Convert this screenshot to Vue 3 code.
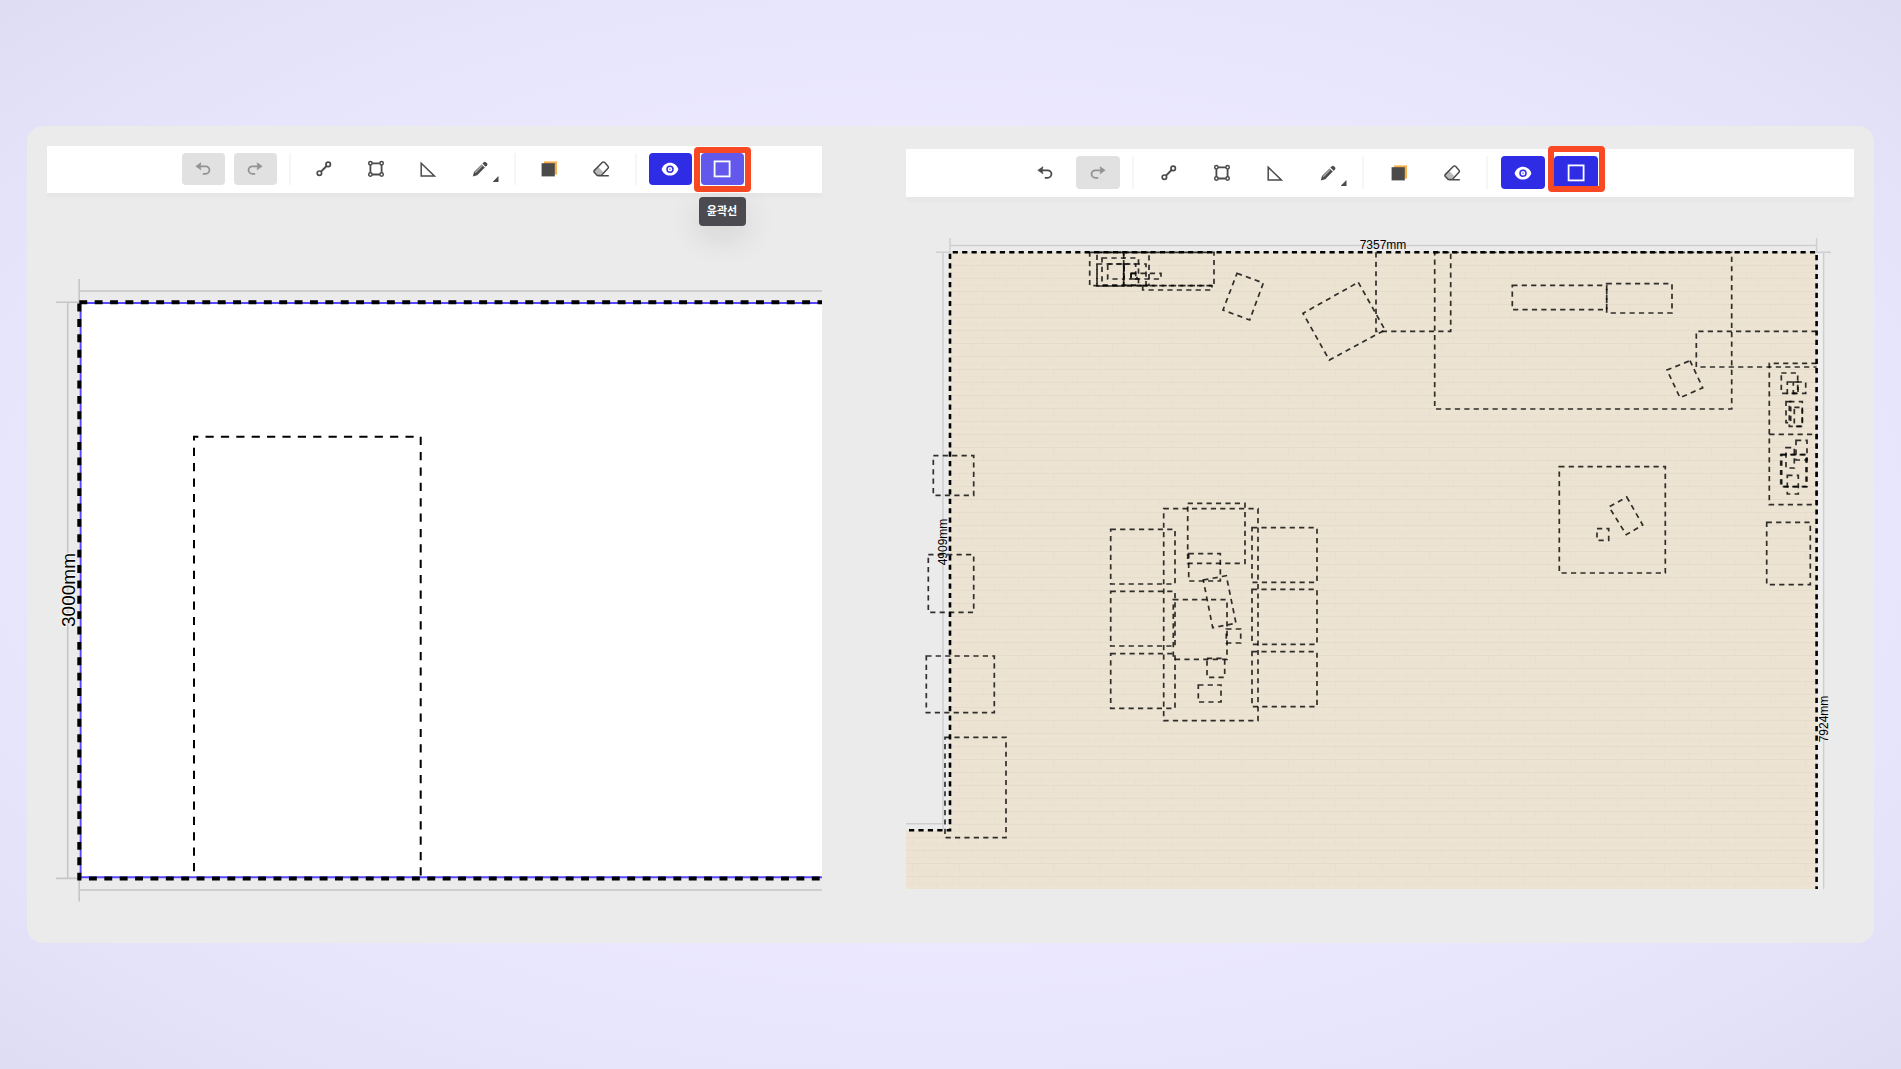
<script setup>
const toolbars = {
  basic: [
    { icon: 'undo', label: '실행 취소', disabled: true },
    { icon: 'redo', label: '다시 실행', disabled: true },
    { divider: true },
    { icon: 'line', label: '선' },
    { icon: 'polygon', label: '다각형' },
    { icon: 'triangle', label: '삼각자' },
    { icon: 'pencil', label: '연필', menu: true },
    { divider: true },
    { icon: 'fill', label: '채우기' },
    { icon: 'eraser', label: '지우개' },
    { divider: true },
    { icon: 'eye', label: '보기', active: true },
    { icon: 'outline', label: '윤곽선', active: true, hover: true, marked: true, tooltip: '윤곽선' },
  ],
  room: [
    { icon: 'undo', label: '실행 취소' },
    { icon: 'redo', label: '다시 실행', disabled: true },
    { divider: true },
    { icon: 'line', label: '선' },
    { icon: 'polygon', label: '다각형' },
    { icon: 'triangle', label: '삼각자' },
    { icon: 'pencil', label: '연필', menu: true },
    { divider: true },
    { icon: 'fill', label: '채우기' },
    { icon: 'eraser', label: '지우개' },
    { divider: true },
    { icon: 'eye', label: '보기', active: true },
    { icon: 'outline', label: '윤곽선', active: true, marked: true },
  ],
}

// Furniture footprints as [left, top, right, bottom]
const boxes = [
  [1089.7, 252.3, 1214, 285.7],
  [1097, 252.3, 1123.7, 286],
  [1123.7, 252.3, 1149, 285.3],
  [1102, 258, 1138.5, 285],
  [1097, 264, 1146, 286],
  [1107.7, 264, 1124, 279],
  [1124, 264, 1135.7, 279],
  [1142.7, 285.7, 1212, 290],
  [1131, 273.3, 1161, 279],
  [1131, 273.3, 1137, 279],
  [1434.7, 252.3, 1731.7, 409],
  [1512.3, 285.3, 1606.7, 309.7],
  [1606.7, 283.7, 1672, 313],
  [1769.3, 434.3, 1816.6, 504.7],
  [1781.3, 373, 1797.7, 393.3],
  [1787.3, 382, 1805.7, 393.3],
  [1793.3, 382, 1798, 393.3],
  [1786, 401.7, 1790.7, 422.7],
  [1789.3, 401.7, 1802.3, 426.3],
  [1794.3, 407.3, 1802.3, 426.3],
  [1796, 440.3, 1807, 460],
  [1786, 447.7, 1794.3, 468],
  [1780.7, 454.7, 1806, 486.7],
  [1781.7, 454.7, 1807, 486.7],
  [1787.3, 475.3, 1798.3, 494],
  [1766.7, 522.3, 1810.3, 584.7],
  [1559.3, 466.7, 1665.3, 573],
  [1597, 528.7, 1608.7, 540.3],
  [1110.7, 529.3, 1175, 584],
  [1110.7, 591.3, 1175, 646],
  [1110.7, 653.7, 1175, 708.3],
  [1252, 527.7, 1317, 582.3],
  [1252, 589.3, 1317, 644.3],
  [1252, 651.7, 1317, 706.7],
  [1163.7, 508.7, 1258, 720.7],
  [1187.7, 503.3, 1245, 563.3],
  [1188.7, 553.7, 1220.3, 581],
  [1173.3, 599.7, 1227, 659.3],
  [1226.3, 629, 1240.7, 643],
  [1207, 658.3, 1224.7, 677.3],
  [1198.3, 685, 1221, 702],
  [933.3, 455.7, 973.7, 495.3],
  [928.3, 554.7, 973.7, 612.3],
  [926.3, 656, 994.3, 712.7],
  [945, 737.3, 1006, 837.7],
]

// Footprints that share one side with a wall
const wallBoxes = [
  'M1376 252.3V331.3H1450.7V252.3',
  'M1816.6 331.3H1696.3V367H1816.6',
  'M1816.6 363.3H1769.3V434.3',
]

const turned = [
  '1237,273.3 1263.3,283 1249.7,320 1223,310',
  '1358.3,282.3 1385,330 1329.3,360 1303,313.3',
  '1690,360.7 1702.7,387.7 1680,397.7 1667,370',
  '1626.7,497 1642.7,525 1626.3,534.7 1609,507',
  '1203.3,580 1226.3,575.7 1236,623.3 1212.7,627.7',
]

const boxPath = ([l, t, r, b]) => `M${l} ${t}H${r}V${b}H${l}Z`
</script>

<template>
  <svg class="sprite" aria-hidden="true">
    <symbol id="undo" viewBox="0 0 20 20">
      <path d="M7 7.3H12.6a3.8 3.7 0 0 1 0 7.5H9.8" fill="none" stroke="currentColor" stroke-width="1.8" />
      <path d="M2.7 7.3 8 3.6 7.4 7.3 8 11Z" fill="currentColor" stroke="currentColor" stroke-width=".4" />
    </symbol>
    <symbol id="redo" viewBox="0 0 20 20">
      <path d="M13 7.3H7.4a3.8 3.7 0 0 0 0 7.5H10.2" fill="none" stroke="currentColor" stroke-width="1.8" />
      <path d="M17.3 7.3 12 3.6 12.6 7.3 12 11Z" fill="currentColor" stroke="currentColor" stroke-width=".4" />
    </symbol>
    <symbol id="line" viewBox="0 0 20 20">
      <g fill="none" stroke="currentColor" stroke-width="1.7">
        <circle cx="14.2" cy="5.4" r="2.2" />
        <circle cx="5.4" cy="14.2" r="2.2" />
        <path d="M7 12.6 12.6 7" stroke-width="2" />
      </g>
    </symbol>
    <symbol id="polygon" viewBox="0 0 20 20">
      <g fill="none" stroke="currentColor" stroke-width="1.5">
        <circle cx="4.4" cy="4.3" r="1.7" />
        <circle cx="15.6" cy="4.3" r="1.7" />
        <circle cx="4.4" cy="15.5" r="1.7" />
        <circle cx="15.6" cy="15.5" r="1.7" />
        <path d="M6.1 4.3H13.9M6.1 15.5H13.9M4.4 6V13.8M15.6 6V13.8" stroke-width="1.8" />
      </g>
    </symbol>
    <symbol id="triangle" viewBox="0 0 20 20">
      <path d="M3.2 4.2V17H16.4Z" fill="none" stroke="currentColor" stroke-width="1.5" />
    </symbol>
    <symbol id="pencil" viewBox="0 0 20 20">
      <path d="M2.8 17.4 4 13 11.6 5.4 14.8 8.6 7.2 16.2Z" fill="currentColor" />
      <path d="M4.6 13.2 12 5.8 13 6.8 5.6 14.2Z" fill="#a9a9a9" />
      <path d="M12.4 4.6 13.8 3.2a1.5 1.5 0 0 1 2.1 0l1.1 1.1a1.5 1.5 0 0 1 0 2.1L15.6 7.8Z" fill="currentColor" />
    </symbol>
    <symbol id="fill" viewBox="0 0 20 20">
      <path d="M5 2.4H18V15.6H5Z" fill="#f8ae4c" />
      <path d="M2.6 17.2H16V18H2.6Z" fill="#c9c9c9" />
      <path d="M2.6 4.2H15.8V17.2H2.6Z" fill="currentColor" />
    </symbol>
    <symbol id="eraser" viewBox="0 0 20 20">
      <path d="M7.1 7.8 12.2 12.9 8.8 16.6H6.2L3.1 12.6Z" fill="#b9b9b9" />
      <path d="M11.5 3.3a1.4 1.4 0 0 1 2 0L17 7.2a1.4 1.4 0 0 1 0 2L10.2 16.6H6.2L3.2 13.3a1.2 1.2 0 0 1 0-1.7ZM7 16.8H17.8" fill="none" stroke="currentColor" stroke-width="1.5" />
    </symbol>
    <symbol id="eye" viewBox="0 0 20 20">
      <path d="M1.6 10.2C3 6.2 6.2 3.8 10 3.8s7 2.4 8.4 6.4c-1.4 4-4.6 6.4-8.4 6.4s-7-2.4-8.4-6.4Z" fill="currentColor" />
      <circle cx="10" cy="10.2" r="3" fill="none" stroke="#2f2ce6" stroke-width="1.5" />
      <circle cx="10" cy="10.2" r=".9" fill="#8583ef" />
    </symbol>
    <symbol id="outline" viewBox="0 0 20 20">
      <rect x="2.6" y="2.4" width="15" height="15" fill="none" stroke="currentColor" stroke-width="1.8" />
    </symbol>
  </svg>

  <main class="page">
    <div class="card">
      <section v-for="(tools, name) in toolbars" :key="name" class="editor" :class="name">
        <div class="toolbar" role="toolbar">
          <template v-for="(tool, i) in tools" :key="i">
            <span v-if="tool.divider" class="divider"></span>
            <div v-else class="slot">
              <button
                type="button"
                class="tool"
                :class="{ active: tool.active, hover: tool.hover }"
                :disabled="tool.disabled"
                :aria-label="tool.label"
              >
                <svg class="icon"><use :href="'#' + tool.icon" /></svg>
                <span v-if="tool.menu" class="corner"></span>
              </button>
              <span v-if="tool.marked" class="marker"></span>
              <span v-if="tool.tooltip" class="tooltip" role="tooltip">{{ tool.tooltip }}</span>
            </div>
          </template>
        </div>

        <svg v-if="name === 'basic'" class="plan" viewBox="47 193 775 720">
          <rect x="79" y="302" width="743" height="576" fill="#fff" />
          <g fill="none" stroke="#c6c6c6" stroke-width="1.6">
            <path d="M67.7 302V878.5M79.3 291H822M79.3 890H822" />
            <path d="M56 302.3H79M56 878.4H79M79.2 279V302M79.2 878V901.5" />
          </g>
          <path d="M822 303H80.6V877.3H822" fill="none" stroke="#5748ff" stroke-width="2" />
          <g fill="none" stroke="#000" stroke-width="4" stroke-dasharray="7.9 7.48">
            <path d="M79.3 302.3H822" />
            <path d="M79.3 303.6V878.4H822" />
          </g>
          <g fill="none" stroke="#000" stroke-width="2" stroke-dasharray="8.2 7.18">
            <path d="M420.7 436.7V876" />
            <path d="M194 878V436.7H420.7" stroke-dashoffset="-6.8" />
          </g>
          <text class="size large" transform="translate(75 590) rotate(-90)">3000mm</text>
        </svg>

        <svg v-else class="plan" viewBox="906 197 948 692">
          <defs>
            <pattern id="planks" x="906" y="252" width="47" height="39" patternUnits="userSpaceOnUse">
              <rect width="47" height="39" fill="#ece3d2" />
              <path d="M0 .5H47M0 13.5H47M0 26.5H47" stroke="#e5dccb" />
              <path d="M0 7.5H47M0 20.5H47M0 33.5H47" stroke="#e9e0cf" />
              <path d="M6.5 1V7M30.5 7V13M18.5 14V20M41.5 20V26M6.5 27V33M30.5 33V39" stroke="#e8dfce" />
            </pattern>
          </defs>
          <path d="M950 252.3H1816.6V889H906V830.3H950Z" fill="url(#planks)" />
          <rect x="1818" y="254" width="5" height="635" fill="#efefef" />
          <g fill="none" stroke="#cfcfcf" stroke-width="1.5">
            <path d="M906 823.7H943M943 830V252.3M950 245.4H1816.6M1823.6 252.3V889" />
            <path d="M936 252.3H950M950 238V252M1816.6 238V252M1816.6 252.3H1831" />
          </g>
          <g fill="none" stroke="#000" stroke-opacity=".8" stroke-width="1.7" stroke-dasharray="5.2 4.22">
            <path v-for="(box, i) in boxes" :key="i" :d="boxPath(box)" />
            <path v-for="d in wallBoxes" :key="d" :d="d" />
            <polygon v-for="points in turned" :key="points" :points="points" />
          </g>
          <path
            d="M906 830.3H950V252.3H1816.6V889"
            fill="none"
            stroke="#000"
            stroke-width="2.6"
            stroke-dasharray="5.2 4.22"
            stroke-dashoffset="-3"
          />
          <text class="size" x="1383" y="249">7357mm</text>
          <text class="size" transform="translate(947 542) rotate(-90)">4909mm</text>
          <text class="size" transform="translate(1828 719) rotate(-90)">7924mm</text>
        </svg>
      </section>
    </div>
  </main>
</template>

<style>
body {
  margin: 0;
}
</style>

<style scoped>
.sprite {
  position: absolute;
  width: 0;
  height: 0;
}

.page {
  box-sizing: border-box;
  min-height: 100vh;
  padding: 126px 27px;
  background: radial-gradient(ellipse farthest-corner, #ece9ff 50%, #e7e5fb 75%, #dfddf4 100%);
  font-family: "Liberation Sans", "Noto Sans CJK KR", sans-serif;
}

.card {
  display: grid;
  grid-template-columns: 775fr 948fr;
  align-items: start;
  column-gap: 84px;
  padding: 20px 20px 30px;
  border-radius: 16px;
  background: #ebebeb;
}

.editor {
  --tool-width: 43px;
  --tool-height: 32px;
  min-width: 0;
}

.room {
  --tool-width: 44px;
  --tool-height: 33px;
  margin-top: 3px;
}

.toolbar {
  position: relative;
  display: flex;
  justify-content: center;
  gap: 9px;
  padding: 7px 0 8px 56px;
  background: #fff;
  box-shadow: 0 5px 3px rgb(0 0 0 / 2%);
}

.room .toolbar {
  padding: 7px 140px 8px 0;
}

.divider {
  width: 2px;
  margin: 0 3px;
  background: #f6f6f6;
}

.room .divider {
  margin-right: 4px;
}

.slot {
  position: relative;
  display: flex;
}

.tool {
  position: relative;
  display: flex;
  align-items: center;
  justify-content: center;
  width: var(--tool-width);
  height: var(--tool-height);
  padding: 0;
  border: 0;
  border-radius: 4px;
  background: transparent;
  color: #4a4a4a;
}

.tool:disabled {
  background: #e1e1e1;
  color: #939393;
}

.tool.active {
  background: #2f2ce6;
  color: #fff;
}

.tool.hover {
  background: #6259ec;
}

.icon {
  width: 20px;
  height: 20px;
}

.corner {
  position: absolute;
  right: 3px;
  bottom: 3px;
  width: 6px;
  height: 6px;
  background: #4a4a4a;
  clip-path: polygon(100% 0, 100% 100%, 0 100%);
}

.marker {
  position: absolute;
  inset: -6px -7px -7px;
  border: 6px solid #f84824;
  border-radius: 4px;
}

.room .marker {
  inset: -10px -7px -3px -6px;
}

.tooltip {
  position: absolute;
  top: 44px;
  left: -2px;
  width: 47px;
  border-radius: 4px;
  background: #4a4a50;
  box-shadow: 0 10px 32px rgb(0 0 0 / 12%);
  color: #fff;
  font-size: 11px;
  font-weight: 700;
  line-height: 28px;
  padding-bottom: 1px;
  text-align: center;
  white-space: nowrap;
}

.plan {
  display: block;
  width: 100%;
  height: auto;
}

.size {
  fill: #000;
  font-size: 12px;
  text-anchor: middle;
}

.size.large {
  stroke: #f4f4f4;
  stroke-width: 2px;
  paint-order: stroke;
  font-size: 19px;
}
</style>
